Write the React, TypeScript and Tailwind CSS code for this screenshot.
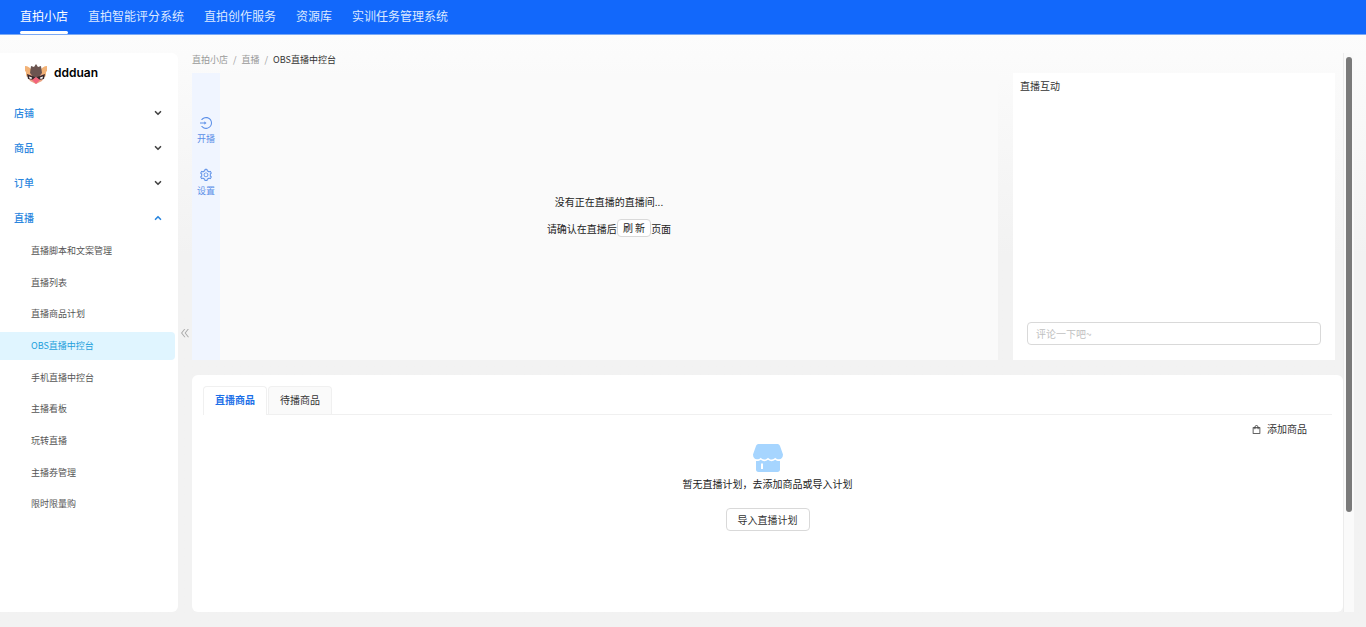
import { useState } from 'react'
import {
  AiOutlineDoubleLeft,
  AiOutlineLogin,
  AiOutlineSetting,
  AiOutlineShopping,
} from 'react-icons/ai'
import { ChevronDown, ChevronUp } from 'lucide-react'

const systems = ['直拍小店', '直拍智能评分系统', '直拍创作服务', '资源库', '实训任务管理系统']

const groups = ['店铺', '商品', '订单', '直播']

const liveMenu = [
  '直播脚本和文案管理',
  '直播列表',
  '直播商品计划',
  'OBS直播中控台',
  '手机直播中控台',
  '主播看板',
  '玩转直播',
  '主播券管理',
  '限时限量购',
]

function TopNav() {
  return (
    <header className="h-[35px] shrink-0 border-b border-[#7aa9f5] bg-[#1268fb] px-5">
      <nav className="flex h-full gap-5 text-[12px] text-[#dce9ff]">
        {systems.map((name, i) => (
          <a
            key={name}
            href="#"
            className={
              i === 0
                ? 'flex flex-col justify-between whitespace-nowrap text-white'
                : 'whitespace-nowrap'
            }
          >
            <span className="leading-8">{name}</span>
            {i === 0 && <span className="-mt-1 h-[3px] shrink-0 rounded-sm bg-white"></span>}
          </a>
        ))}
      </nav>
    </header>
  )
}

function Avatar() {
  return (
    <svg viewBox="0 0 24 22" className="h-[22px] w-6" aria-hidden="true">
      <path d="M1 3c3 0 5 2 7 4l-1 6-4 1C1 11 3 9 1 8Z" fill="#f2b277" />
      <path d="M23 3c-3 0-5 2-7 4l1 6 4 1c2-3 0-5 2-6Z" fill="#f2b277" />
      <path d="M3 12l6-2 3 2 3-2 6 2-3 6-6 3-6-3Z" fill="#e9a584" />
      <path d="M7 3l3 1 2-3 2 3 3-1 1 7-4 5h-4l-4-5Z" fill="#6b5450" />
      <path d="M3 11l8 3-1 3-6-1ZM21 11l-8 3 1 3 6-1Z" fill="#38292c" />
      <path d="M5 13.500l3 1-.5 1.500-2-.5ZM19 13.500l-3 1 .5 1.500 2-.5Z" fill="#fff" />
      <path d="M12 14l4 3-4 4-4-4Z" fill="#f2647c" />
    </svg>
  )
}

function Sidebar() {
  return (
    <aside className="w-[178px] shrink-0 rounded-r-md bg-white">
      <div className="flex h-[42px] items-center gap-[6px] pl-6">
        <Avatar />
        <span className="pb-[2px] font-['Inter','Noto_Sans_CJK_SC',sans-serif] text-[12px] leading-4 font-semibold text-black">
          ddduan
        </span>
      </div>
      {groups.map((name, i) => {
        const open = i === groups.length - 1
        return (
          <button
            key={name}
            aria-expanded={open}
            className="flex h-[35px] w-full items-center justify-between pr-[15px] pl-[14px] text-[10px] font-medium text-[#2a86de]"
          >
            {name}
            {open ? (
              <ChevronUp className="size-[10px]" strokeWidth={4} />
            ) : (
              <ChevronDown className="size-[10px] text-[#444]" strokeWidth={4} />
            )}
          </button>
        )
      })}
      <ul className="grid h-[285px] auto-rows-fr pr-[3px] text-[9px] text-[#555]">
        {liveMenu.map((name) => (
          <li key={name} className="flex py-[2px]">
            <a
              href="#"
              className={
                name === 'OBS直播中控台'
                  ? 'flex flex-1 items-center rounded-r-sm bg-[#e0f5ff] pl-[31px] text-[#1c9fdc]'
                  : 'flex flex-1 items-center pl-[31px]'
              }
            >
              {name}
            </a>
          </li>
        ))}
      </ul>
    </aside>
  )
}

function Breadcrumb() {
  return (
    <nav aria-label="breadcrumb" className="flex h-5 gap-[5px] text-[9px] leading-[13px] text-[#999]">
      <a href="#">直拍小店</a>
      <span>/</span>
      <a href="#">直播</a>
      <span>/</span>
      <span className="text-[#333]">OBS直播中控台</span>
    </nav>
  )
}

function LiveStage() {
  return (
    <section className="flex flex-1 bg-[#fafafa]">
      <div className="flex w-7 flex-col items-center gap-[22px] bg-[#f0f5ff] pt-[43px] text-[9px] leading-[14px] text-[#5b8fe8]">
        <button className="flex flex-col items-center gap-[2px] whitespace-nowrap">
          <AiOutlineLogin className="size-[14px]" />
          开播
        </button>
        <button className="flex flex-col items-center gap-[2px] whitespace-nowrap">
          <AiOutlineSetting className="size-[14px]" />
          设置
        </button>
      </div>
      <div className="flex flex-1 flex-col items-center justify-center pb-[3px] text-[10px] text-[#222]">
        <p className="leading-[26px]">没有正在直播的直播间...</p>
        <p className="flex h-[26px] items-center">
          请确认在直播后
          <button className="h-[18px] rounded-sm border border-[#d9d9d9] bg-white px-[5px] leading-4">
            刷 新
          </button>
          页面
        </p>
      </div>
    </section>
  )
}

function Interaction() {
  const [comment, setComment] = useState('')

  return (
    <section className="flex w-[322px] shrink-0 flex-col justify-between bg-white pb-[15px] text-[10px]">
      <h2 className="px-[7px] pt-[5px] leading-4 text-[#333]">直播互动</h2>
      <div className="flex px-[14px]">
        <input
          aria-label="评论"
          placeholder="评论一下吧~"
          value={comment}
          onChange={(e) => setComment(e.target.value)}
          className="h-[23px] w-full rounded border border-[#d9d9d9] px-2 placeholder:text-[#bfbfbf]"
        />
      </div>
    </section>
  )
}

function ShopIcon() {
  return (
    <svg viewBox="0 0 30 28" className="h-7 w-[30px]" fill="#a6d5ff" aria-hidden="true">
      <path d="M6 0h18c1.500 0 2.300.6 3 2l3 8.500c0 3-1.600 4.800-4 4.800-1.600 0-2.600-.5-3.800-1.500-1.100 1-2 1.700-3.600 1.700-1.500 0-2.500-.8-3.600-1.800-1.100 1-2.100 1.800-3.600 1.800-1.600 0-2.500-.7-3.600-1.700C6.600 14.800 5.600 15.300 4 15.300c-2.400 0-4-1.800-4-4.800L3 2C3.700.6 4.500 0 6 0Z" />
      <path
        fillRule="evenodd"
        d="M3 17c2 .3 3.500-.2 4.800-1.200 2.300 1.900 5 1.900 7.200 0 2.200 1.900 4.900 1.900 7.200 0 1.300 1 2.800 1.500 4.800 1.200v8.500c0 1.600-.9 2.500-2.500 2.500h-19C3.900 28 3 27.100 3 25.500Zm5 2.500v5.500h2v-5.500Z"
      />
    </svg>
  )
}

function Products() {
  return (
    <section className="flex-1 rounded-md bg-white pt-[11px] pr-[11px] pb-20 pl-[11px] text-[10px] text-[#333]">
      <div role="tablist" className="flex gap-[1px] border-b border-[#f0f0f0]">
        <button
          role="tab"
          aria-selected="true"
          className="-mb-px h-[29px] rounded-t border border-b-0 border-[#f0f0f0] bg-white px-[11px] pb-[3px] font-bold text-[#1d70e8]"
        >
          直播商品
        </button>
        <button
          role="tab"
          aria-selected="false"
          className="h-7 rounded-t border border-b-0 border-[#f0f0f0] bg-[#fafafa] px-[11px] pb-[2px]"
        >
          待播商品
        </button>
      </div>
      <div className="flex justify-end pt-[6px] pr-[25px]">
        <button className="flex items-center gap-[5px] leading-4">
          <AiOutlineShopping className="size-[11px]" />
          添加商品
        </button>
      </div>
      <div className="flex flex-col items-center pt-[7px]">
        <ShopIcon />
        <p className="pt-1 leading-4 text-[#222]">暂无直播计划，去添加商品或导入计划</p>
        <button className="mt-4 h-[23px] rounded border border-[#d9d9d9] bg-white px-[11px] leading-5">
          导入直播计划
        </button>
      </div>
    </section>
  )
}

export default function App() {
  return (
    <div className="flex min-h-screen flex-col bg-[#f2f2f2] font-['Noto_Sans_CJK_SC',sans-serif]">
      <TopNav />
      <div className="flex flex-1 bg-linear-to-b from-[#fcfcfc] to-[#f2f2f2] to-[220px] pt-[18px] pr-3 pb-[15px]">
        <Sidebar />
        <button aria-label="收起菜单" className="flex w-[14px] shrink-0 items-center justify-center text-[#aaa]">
          <AiOutlineDoubleLeft className="size-3" />
        </button>
        <main className="flex min-w-0 flex-1 flex-col">
          <Breadcrumb />
          <div className="mr-2 mb-[15px] flex min-h-[287px] gap-[15px]">
            <LiveStage />
            <Interaction />
          </div>
          <Products />
        </main>
        {/* scroll track */}
        <div className="flex w-[11px] shrink-0 justify-center border-l border-[#ececec] bg-[#fafafa] pt-1">
          <div className="h-[82%] w-[6px] rounded-full bg-[#7a7a7a]"></div>
        </div>
      </div>
    </div>
  )
}
